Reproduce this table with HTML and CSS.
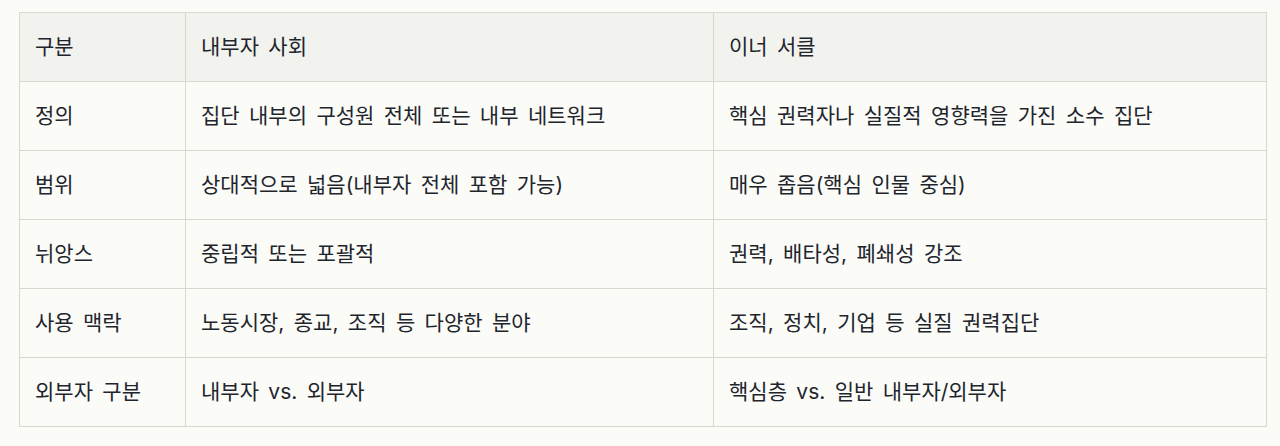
FILE: index.html
```html
<!DOCTYPE html>
<html lang="ko">
<head>
<meta charset="utf-8">
<link rel="stylesheet" href="styles.css">
</head>
<body>
<div class="wrap">
<table class="cmp">
  <colgroup>
    <col class="c1">
    <col class="c2">
    <col class="c3">
  </colgroup>
  <thead>
    <tr><th>구분</th><th>내부자 사회</th><th>이너 서클</th></tr>
  </thead>
  <tbody>
    <tr><td>정의</td><td>집단 내부의 구성원 전체 또는 내부 네트워크</td><td>핵심 권력자나 실질적 영향력을 가진 소수 집단</td></tr>
    <tr><td>범위</td><td>상대적으로 넓음(내부자 전체 포함 가능)</td><td>매우 좁음(핵심 인물 중심)</td></tr>
    <tr><td>뉘앙스</td><td>중립적 또는 포괄적</td><td>권력, 배타성, 폐쇄성 강조</td></tr>
    <tr><td>사용 맥락</td><td>노동시장, 종교, 조직 등 다양한 분야</td><td>조직, 정치, 기업 등 실질 권력집단</td></tr>
    <tr><td>외부자 구분</td><td>내부자 vs. 외부자</td><td>핵심층 vs. 일반 내부자/외부자</td></tr>
  </tbody>
</table>
</div>
</body>
</html>
```
FILE: styles.css
```css
html, body {
  margin: 0;
  padding: 0;
  background: #fbfbf8;
}
.wrap {
  padding: 12px 14px 0 19px;
}
.cmp {
  width: 1247px;
  border-collapse: collapse;
  table-layout: fixed;
  font-family: Inter, "Noto Sans CJK KR", sans-serif;
  font-size: 21px;
  word-spacing: 3.5px;
  color: #1e252d;
}
.c1 { width: 166px; }
.c2 { width: 528px; }
.c3 { width: 553px; }
.cmp th, .cmp td {
  border: 1px solid #d8d8d0;
  padding: 20px 15px;
  line-height: 28px;
  height: 28px;
  text-align: left;
  font-weight: 400;
  vertical-align: middle;
  white-space: nowrap;
}
.cmp thead th {
  background: #f2f2ee;
}
```
